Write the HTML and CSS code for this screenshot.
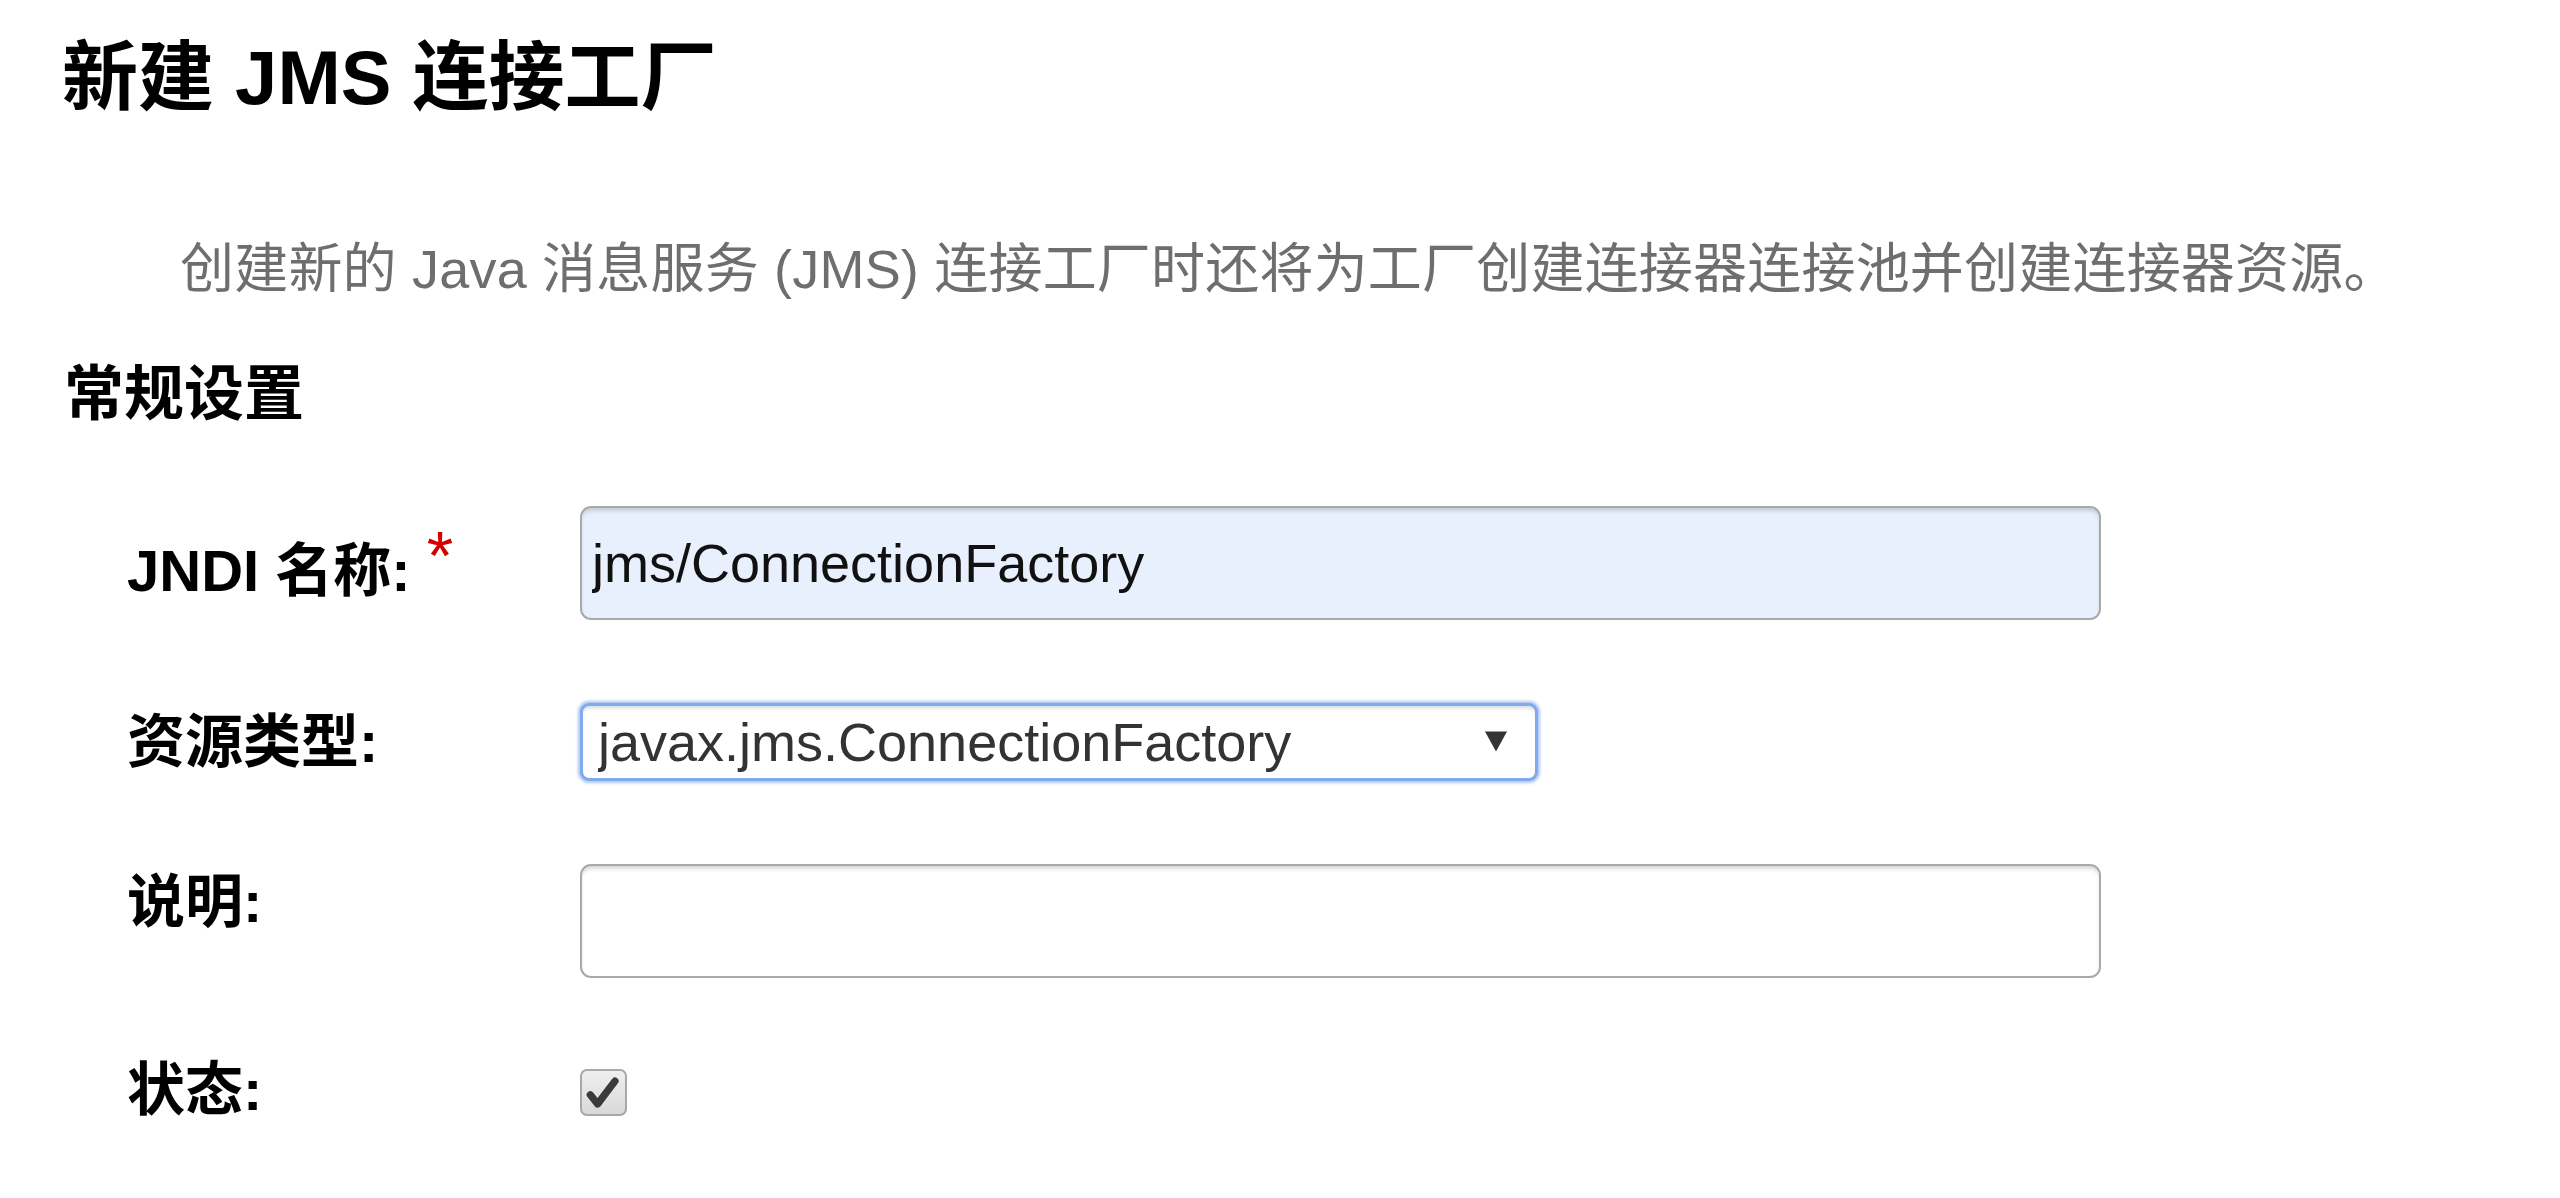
FILE: index.html
```html
<!DOCTYPE html>
<html lang="zh-CN">
<head>
<meta charset="utf-8">
<title>新建 JMS 连接工厂</title>
<link rel="stylesheet" href="styles.css">
</head>
<body>
<div class="page">
  <h1 class="title">新建 JMS 连接工厂</h1>
  <p class="desc">创建新的 Java 消息服务 (JMS) 连接工厂时还将为工厂创建连接器连接池并创建连接器资源。</p>
  <h2 class="section">常规设置</h2>
  <div class="form">
    <label class="label">JNDI 名称: <span class="req">*</span></label>
    <div class="field">
      <input class="text-input text-input--autofill" type="text" value="jms/ConnectionFactory">
    </div>

    <label class="label">资源类型:</label>
    <div class="field">
      <div class="select-wrap">
        <select class="select">
          <option>javax.jms.ConnectionFactory</option>
        </select>
        <svg class="select-arrow" viewBox="0 0 22 20" width="22" height="21" aria-hidden="true"><path d="M0 0 H22 L11 20 Z" fill="#333"/></svg>
      </div>
    </div>

    <label class="label label--top">说明:</label>
    <div class="field">
      <input class="text-input" type="text" value="">
    </div>

    <label class="label">状态:</label>
    <div class="field">
      <span class="checkbox" role="checkbox" aria-checked="true">
        <svg viewBox="0 0 46 46" width="42" height="42" aria-hidden="true"><path d="M8 25 L16 35 L35 10" fill="none" stroke="#3a3a3a" stroke-width="8" stroke-linecap="round" stroke-linejoin="round"/></svg>
      </span>
    </div>
  </div>
</div>
</body>
</html>
```

FILE: styles.css
```css
html, body {
  margin: 0;
  padding: 0;
  background: #ffffff;
}

body {
  font-family: "Liberation Sans", "Noto Sans CJK SC", Arial, sans-serif;
  color: #000;
}

.page {
  padding: 40px 0 0 0;
  display: flex;
  flex-direction: column;
}

.title {
  margin: 0 0 0 62px;
  font-size: 76px;
  line-height: 76px;
  font-weight: bold;
  color: #000;
}

.desc {
  margin: 126px 0 0 180px;
  font-size: 54px;
  line-height: 54px;
  color: #6e6e6e;
  letter-spacing: 0.2px;
  white-space: nowrap;
}

.section {
  margin: 69px 0 0 64px;
  font-size: 60px;
  line-height: 60px;
  font-weight: bold;
  color: #000;
}

.form {
  margin: 81px 0 0 127px;
  display: grid;
  grid-template-columns: 453px 1fr;
  row-gap: 83px;
  align-items: center;
}

.label {
  font-size: 58px;
  line-height: 58px;
  font-weight: bold;
  color: #000;
  white-space: nowrap;
}

.label--top {
  align-self: start;
  padding-top: 9px;
}

.req {
  color: #d40000;
  font-weight: normal;
  font-size: 68px;
  vertical-align: 12px;
}

.field {
  display: flex;
  align-items: center;
}

.text-input {
  box-sizing: border-box;
  width: 1521px;
  height: 114px;
  margin: 0;
  padding: 0 10px;
  border: 2px solid #a9a9a9;
  border-radius: 11px;
  background: #ffffff;
  box-shadow: inset 0 4px 5px -2px rgba(0, 0, 0, 0.2);
  font-family: "Liberation Sans", Arial, sans-serif;
  font-size: 54px;
  color: #111;
  outline: none;
}

.text-input--autofill {
  background: #e8f0fe;
}

.select-wrap {
  position: relative;
  display: flex;
}

.select {
  box-sizing: border-box;
  -webkit-appearance: none;
  appearance: none;
  width: 958px;
  height: 78px;
  margin: 0;
  padding: 0 60px 0 15px;
  border: 3px solid #80a9ee;
  border-radius: 9px;
  background: #ffffff;
  box-shadow: 0 0 3px 2px rgba(120, 160, 235, 0.6), inset 0 4px 4px -2px rgba(0, 0, 0, 0.15);
  font-family: "Liberation Sans", Arial, sans-serif;
  font-size: 54px;
  color: #333;
  outline: none;
}

.select-arrow {
  position: absolute;
  right: 31px;
  top: 28px;
}

.checkbox {
  box-sizing: border-box;
  margin-top: 5px;
  width: 47px;
  height: 47px;
  border: 2px solid #a8a8a8;
  border-radius: 7px;
  background: linear-gradient(#efefef, #d9d9d9);
  display: flex;
  align-items: center;
  justify-content: center;
}
```
